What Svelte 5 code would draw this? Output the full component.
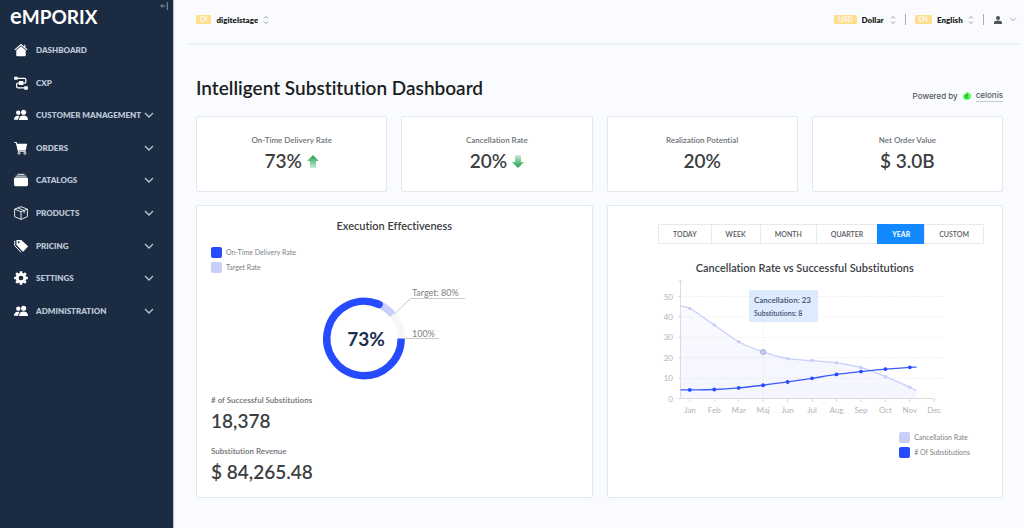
<script>
  const navItems = [
    { label: 'Dashboard', icon: 'home' },
    { label: 'CXP', icon: 'flow' },
    { label: 'Customer Management', icon: 'users', group: true },
    { label: 'Orders', icon: 'cart', group: true },
    { label: 'Catalogs', icon: 'stack', group: true },
    { label: 'Products', icon: 'box', group: true },
    { label: 'Pricing', icon: 'tag', group: true },
    { label: 'Settings', icon: 'gear', group: true },
    { label: 'Administration', icon: 'users', group: true },
  ]

  const kpis = [
    { label: 'On-Time Delivery Rate', value: '73%', trend: 'up' },
    { label: 'Cancellation Rate', value: '20%', trend: 'down' },
    { label: 'Realization Potential', value: '20%' },
    { label: 'Net Order Value', value: '$ 3.0B' },
  ]

  const totals = [
    { label: '# of Successful Substitutions', value: '18,378' },
    { label: 'Substitution Revenue', value: '$ 84,265.48' },
  ]

  const ranges = ['Today', 'Week', 'Month', 'Quarter', 'Year', 'Custom']
  let range = $state('Year')

  const months = ['Jan', 'Feb', 'Mar', 'Maj', 'Jun', 'Jul', 'Aug', 'Sep', 'Oct', 'Nov', 'Dec']
  const ticks = [0, 10, 20, 30, 40, 50]
  const cancellations = [44.1, 36, 27.8, 22.8, 19.5, 18.6, 17.5, 15.2, 10.7, 5.5]
  const substitutions = [4.2, 4.4, 5.2, 6.5, 8.1, 9.9, 11.8, 13.2, 14.4, 15.3]

  const x = (i) => 29.8 + i * 24.45
  const y = (v) => 123.5 - v * 2.04

  // smooth line through the points, running a little past both ends
  function curve(values, first, last) {
    const pts = [
      [20.5, y(first)],
      ...values.map((v, i) => [x(i), y(v)]),
      [256.5, y(last)],
    ]
    let d = `M${pts[0]}`
    for (let i = 0; i < pts.length - 1; i++) {
      const p0 = pts[Math.max(i - 1, 0)]
      const p1 = pts[i]
      const p2 = pts[i + 1]
      const p3 = pts[Math.min(i + 2, pts.length - 1)]
      const w = (p2[0] - p1[0]) / 3
      const m1 = (p2[1] - p0[1]) / (p2[0] - p0[0])
      const m2 = (p3[1] - p1[1]) / (p3[0] - p1[0])
      d += `C${p1[0] + w},${p1[1] + m1 * w} ${p2[0] - w},${p2[1] - m2 * w} ${p2}`
    }
    return d
  }

  const cancelPath = curve(cancellations, 45.3, 3.8)
  const subsPath = curve(substitutions, 4.2, 15.4)

  // clockwise from three o'clock, in degrees
  function arc(from, to) {
    const p = (a) => {
      const r = (a * Math.PI) / 180
      return `${45 + 37.2 * Math.cos(r)},${53.5 + 37.2 * Math.sin(r)}`
    }
    return `M${p(from)}A37.2,37.2 0 ${to - from > 180 ? 1 : 0} 1 ${p(to)}`
  }
</script>

{#snippet icon(name)}
  <svg class="icon" viewBox="0 0 16 16" aria-hidden="true">
    {#if name === 'home'}
      <path d="M2.6 8.2 8 3.6l5.4 4.6V14a1 1 0 0 1-1 1H3.6a1 1 0 0 1-1-1z" fill="#fff" />
      <path d="M.9 7.8 8 1.7l7.1 6.1M12.4 2v3" fill="none" stroke="#fff" stroke-width="1.3" />
    {:else if name === 'flow'}
      <path d="M3 2.6h9a1.6 1.6 0 0 1 1.6 1.6v2.3a1.6 1.6 0 0 1-1.6 1.6H4.6A1.6 1.6 0 0 0 3 9.7V12a1.6 1.6 0 0 0 1.6 1.6H14" fill="none" stroke="#fff" stroke-width="1.4" />
      <path d="M.2.8h4v3.6h-4zM5.6 5.8h5v4.6h-5zM11.8 11.8h4v3.8h-4z" fill="#fff" />
    {:else if name === 'users'}
      <circle cx="4.9" cy="5.3" r="2.5" fill="#fff" />
      <circle cx="11" cy="4.8" r="2.9" fill="#fff" />
      <path d="M0 13.4c0-3 1.8-4.6 4.6-4.6.7 0 1.3.1 1.8.4-1 .9-1.5 2.3-1.5 4.2zM5.8 13.6c0-3.3 2-5 5.1-5s5.1 1.7 5.1 5z" fill="#fff" />
    {:else if name === 'cart'}
      <path d="M.4 1.6h2.2L5 11.8h8.6" fill="none" stroke="#fff" stroke-width="1.2" />
      <path d="M2.8 3H15l-1.6 7.8H4.8z" fill="#fff" />
      <circle cx="5.8" cy="14" r="1.2" fill="none" stroke="#fff" />
      <circle cx="12.4" cy="14" r="1.2" fill="none" stroke="#fff" />
    {:else if name === 'stack'}
      <rect y="5.2" width="16" height="9.8" rx="1.6" fill="#fff" />
      <path d="M1.8 3.6h12.4M4 1.5h8" stroke="#fff" stroke-width="1.1" />
    {:else if name === 'box'}
      <path d="M8 .8 15.3 3.6v8.6L8 15.3.7 12.2V3.6zM.7 3.6 8 6.6l7.3-3M8 6.6v8.7M4.3 2.2l7.3 3v3" fill="none" stroke="#fff" stroke-linejoin="round" />
    {:else if name === 'tag'}
      <path d="M2.8 1.2h5.4l7.3 6.6a1 1 0 0 1 0 1.4L11 14a1 1 0 0 1-1.4 0L2.8 6.8z" fill="#fff" />
      <circle cx="5.4" cy="3.8" r="1.1" fill="#1b2b41" />
      <path d="M.8 2v5.6l7.3 7.7" fill="none" stroke="#fff" stroke-width="1.1" />
    {:else if name === 'gear'}
      <circle cx="8" cy="8" r="4.4" fill="none" stroke="#fff" stroke-width="3.4" />
      <path d="M8 .2v3M8 12.8v3M.2 8h3M12.8 8h3M2.5 2.5l2 2M11.5 11.5l2 2M2.5 13.5l2-2M11.5 4.5l2-2" stroke="#fff" stroke-width="3" />
    {/if}
  </svg>
{/snippet}

{#snippet chevron()}
  <svg class="chevron" viewBox="0 0 10 6" aria-hidden="true">
    <path d="M1 1l4 4 4-4" fill="none" stroke="currentColor" stroke-width="1.3" />
  </svg>
{/snippet}

{#snippet picker(code, label, value)}
  <label class="picker">
    <span class="code">{code}</span>
    <select aria-label={label}>
      <option>{value}</option>
    </select>
    <svg class="updown" viewBox="0 0 6 10" aria-hidden="true">
      <path d="M1 3.5 3 1.5l2 2M1 6.5l2 2 2-2" fill="none" stroke="#9a9da3" />
    </svg>
  </label>
{/snippet}

<div class="app">
  <aside class="sidebar">
    <div class="brand">
      <a class="logo" href="#home"><span class="logo-e">e</span>MPORIX</a>
      <button class="collapse" aria-label="Collapse menu">
        <svg viewBox="0 0 8 8" aria-hidden="true">
          <path d="M5.5 4H.8M2.6 2.2.8 4l1.8 1.8M7.3 0v8" fill="none" stroke="#a3adba" stroke-width=".8" />
        </svg>
      </button>
    </div>
    <nav>
      {#each navItems as item}
        {#if item.group}
          <button class="nav-item">
            {@render icon(item.icon)}
            <span>{item.label}</span>
            {@render chevron()}
          </button>
        {:else}
          <a class="nav-item" href="#{item.icon}">
            {@render icon(item.icon)}
            <span>{item.label}</span>
          </a>
        {/if}
      {/each}
    </nav>
  </aside>

  <main>
    <header class="topbar">
      {@render picker('DI', 'Tenant', 'digitelstage')}
      <div class="tools">
        {@render picker('USD', 'Currency', 'Dollar')}
        <span class="divider"></span>
        {@render picker('EN', 'Language', 'English')}
        <span class="divider"></span>
        <button class="account" aria-label="Account">
          <svg class="person" viewBox="0 0 8 8" aria-hidden="true">
            <circle cx="4" cy="2" r="2" fill="#4e5358" />
            <path d="M0 8V6.8C0 5.4 1.5 4.6 4 4.6s4 .8 4 2.2V8z" fill="#4e5358" />
          </svg>
          <svg class="caret" viewBox="0 0 8 5" aria-hidden="true">
            <path d="M1 .8l3 3 3-3" fill="none" stroke="#9a9da3" stroke-width=".8" />
          </svg>
        </button>
      </div>
    </header>

    <div class="content">
      <div class="heading">
        <h1>Intelligent Substitution Dashboard</h1>
        <p class="powered">
          Powered by
          <svg viewBox="0 0 8 8" aria-hidden="true">
            <path d="M4.3 0c.8-.1 1 .9 1.8 1.2C7.6 1.7 8.2 3 7.8 4.5 7.6 6 7 7.4 5.6 7.6 4 8.2 2.2 8 1.3 7.1.3 6.5 0 5.5.1 4.3c0-1.4.9-1.9 1.9-2.3C3 1.5 3.3.2 4.3 0z" fill="#4dfb4b" />
            <path d="M5 3.2a1.4 1.4 0 1 0 0 1.9" fill="none" stroke="#17611f" stroke-width=".8" />
          </svg>
          <a href="#celonis">celonis</a>
        </p>
      </div>

      <section class="kpis">
        {#each kpis as kpi}
          <article class="card kpi">
            <h2 class="label">{kpi.label}</h2>
            <p class="value">
              {kpi.value}
              {#if kpi.trend}
                <svg class="trend {kpi.trend}" viewBox="0 0 12 13" role="img" aria-label={kpi.trend}>
                  <defs>
                    <linearGradient id="trend-{kpi.trend}" x1="0" y1="0" x2="0" y2="1">
                      <stop offset="0.2" stop-color="#3cae63" />
                      <stop offset="1" stop-color="#3cae63" stop-opacity="0.25" />
                    </linearGradient>
                  </defs>
                  <path d="M6 0l6 6H9v7H3V6H0z" fill="url(#trend-{kpi.trend})" />
                </svg>
              {/if}
            </p>
          </article>
        {/each}
      </section>

      <section class="panels">
        <article class="card panel">
          <h2 class="title">Execution Effectiveness</h2>
          <ul class="legend">
            <li><span class="swatch strong"></span>On-Time Delivery Rate</li>
            <li><span class="swatch soft"></span>Target Rate</li>
          </ul>

          <svg class="donut" viewBox="0 0 150 97" role="img" aria-label="On-time delivery 73%, target 80%">
            <g fill="none" stroke-width="7.4">
              <path d={arc(318, 360)} stroke="#f7f7f8" />
              <path d={arc(290, 320)} stroke="#c9cffb" />
              <path d={arc(0, 292)} stroke="#264bff" />
              <path d={arc(290, 294)} stroke="#264bff" stroke-linecap="round" />
            </g>
            <path d="M75 29.5 91.5 13.5H146M85.5 53.5H120" fill="none" stroke="#cbcbcb" />
            <text class="donut-note" x="93" y="11">Target: 80%</text>
            <text class="donut-note" x="93" y="52">100%</text>
            <text class="donut-value" x="47" y="61">73%</text>
          </svg>

          <dl class="totals">
            {#each totals as total}
              <div>
                <dt class="label">{total.label}</dt>
                <dd class="value">{total.value}</dd>
              </div>
            {/each}
          </dl>
        </article>

        <article class="card panel">
          <div class="ranges">
            {#each ranges as r}
              <button class:active={range === r} aria-pressed={range === r} onclick={() => (range = r)}>{r}</button>
            {/each}
          </div>
          <h2 class="title chart-title">Cancellation Rate vs Successful Substitutions</h2>

          <svg class="chart" viewBox="0 0 290 145" role="img" aria-label="Cancellations and substitutions by month">
            <defs>
              <linearGradient id="area" x1="0" y1="0" x2="0" y2="1">
                <stop offset="0" stop-color="#c9cffb" stop-opacity="0.1" />
                <stop offset="1" stop-color="#c9cffb" stop-opacity="0.2" />
              </linearGradient>
            </defs>

            {#each ticks as t}
              {#if t > 0}
                <path d="M21 {y(t)}H285" stroke="#f2f2f2" stroke-dasharray="2 1" />
              {/if}
              <path d="M18 {y(t)}h3" stroke="#d9d9d9" />
              <text class="axis" x="13" y={y(t) + 3} text-anchor="end">{t}</text>
            {/each}
            {#each months as m, i}
              <path d="M{x(i)} 124v3" stroke="#d9d9d9" />
              <text class="axis" x={x(i)} y="138" text-anchor="middle">{m}</text>
            {/each}
            <path d="M{x(3)} 47v76" stroke="#f2f2f2" stroke-dasharray="2 1" />

            <path d="{cancelPath}V123.5H20.5z" fill="url(#area)" />
            <path d="M20.5 5.5v118H{x(10)}M18.5 7l2-2 2 2" fill="none" stroke="#dcdcdc" />

            <path d={cancelPath} fill="none" stroke="#c9cffb" stroke-width="1.3" />
            <path d={subsPath} fill="none" stroke="#3b5bff" stroke-width="1.3" />
            {#each cancellations as v, i}
              {#if i === 3}
                <circle cx={x(i)} cy={y(v)} r="2.5" fill="#c9cffb" stroke="#a0a5d8" />
              {:else}
                <circle cx={x(i)} cy={y(v)} r="1.8" fill="#c9cffb" />
              {/if}
            {/each}
            {#each substitutions as v, i}
              <circle cx={x(i)} cy={y(v)} r="1.9" fill="#264bff" />
            {/each}

            <rect x="89" y="15" width="69" height="32" rx="1" fill="#deebff" />
            <text class="tip" x="94" y="28">Cancellation: 23</text>
            <text class="tip small" x="94" y="41">Substitutions: 8</text>
          </svg>

          <ul class="legend chart-legend">
            <li><span class="swatch soft"></span>Cancellation Rate</li>
            <li><span class="swatch strong"></span># Of Substitutions</li>
          </ul>
        </article>
      </section>
    </div>
  </main>
</div>

<style>
  :global(body) {
    margin: 0;
    background: #fafbfe;
  }

  .app {
    display: flex;
    min-height: 100vh;
    font-family: Lato, 'Liberation Sans', sans-serif;
    font-variant-ligatures: none;
    color: #3c4043;
  }

  h1, h2, p, ul, dl, dd {
    margin: 0;
    padding: 0;
  }

  button, select {
    font: inherit;
    color: inherit;
    background: none;
    border: 0;
    padding: 0;
    cursor: pointer;
  }

  /* Sidebar */
  .sidebar {
    width: 173px;
    flex-shrink: 0;
    background: #1b2b41;
    box-shadow: 1px 0 1px #c3c8cf;
  }

  .brand {
    display: flex;
    justify-content: space-between;
    align-items: flex-start;
    height: 34px;
    padding: 0 5px 0 10px;
  }

  .logo {
    color: #fff;
    font-size: 19px;
    font-weight: 700;
    line-height: 24px;
    padding-top: 4px;
    text-decoration: none;
  }

  .logo-e {
    font-size: 22px;
  }

  .collapse {
    display: flex;
    padding-top: 2px;
  }

  .collapse svg {
    width: 8px;
    height: 8px;
  }

  nav {
    display: grid;
    grid-template-columns: minmax(0, 1fr);
    grid-auto-rows: 1fr;
    min-height: 293px;
  }

  .nav-item {
    display: flex;
    align-items: center;
    gap: 8px;
    padding: 0 19px 0 14px;
    color: #b9c5d5;
    font-size: 8px;
    font-weight: 800;
    text-transform: uppercase;
    text-decoration: none;
    text-align: left;
    white-space: nowrap;
  }

  .nav-item span {
    flex: 1;
    min-width: 0;
  }

  .icon {
    width: 14px;
    height: 14px;
    flex-shrink: 0;
  }

  .chevron {
    width: 10px;
    height: 6px;
    margin-left: -8px;
    flex-shrink: 0;
  }

  /* Top bar */
  main {
    flex: 1;
    min-width: 0;
  }

  .topbar {
    display: flex;
    justify-content: space-between;
    align-items: center;
    height: 39px;
    margin: 0 3px 0 14px;
    padding: 0 4px 4px 9px;
    border-bottom: 2px solid #eef1f8;
  }

  .tools, .picker, .account {
    display: flex;
    align-items: center;
  }

  .tools {
    gap: 9px;
  }

  .picker {
    gap: 5px;
  }

  .code {
    padding: 0 4px;
    border-radius: 1px;
    background: #ffdf8e;
    color: #fffaf0;
    font-size: 7px;
    font-weight: 700;
    line-height: 9px;
  }

  select {
    appearance: none;
    color: #1d1f21;
    font-size: 8px;
    font-weight: 800;
    line-height: 12px;
  }

  .updown {
    width: 6px;
    height: 10px;
  }

  .divider {
    width: 1px;
    height: 11px;
    background: #a9abb0;
  }

  .account {
    gap: 7px;
    padding-left: 1px;
  }

  .person {
    width: 8px;
    height: 8px;
  }

  .caret {
    width: 8px;
    height: 5px;
  }

  /* Content */
  .content {
    padding: 29px 21px 30px 23px;
  }

  .heading {
    display: flex;
    justify-content: space-between;
    align-items: flex-end;
    margin-bottom: 14px;
  }

  h1 {
    color: #1b1d1f;
    font-size: 19px;
    font-weight: 600;
    line-height: 28px;
  }

  .powered {
    display: flex;
    align-items: center;
    gap: 5px;
    color: #55585c;
    font-family: Inter, 'Liberation Sans', sans-serif;
    font-size: 8px;
    font-weight: 500;
    line-height: 11px;
  }

  .powered svg {
    width: 8px;
    height: 8px;
  }

  .powered a {
    color: inherit;
    text-decoration: none;
    border-bottom: 1px solid #c9cacd;
  }

  .card {
    background: #fff;
    border: 1px solid #e1e8f0;
    border-radius: 2px;
  }

  .kpis {
    display: grid;
    grid-template-columns: repeat(4, 1fr);
    gap: 14px;
    margin-bottom: 13px;
  }

  .kpi {
    padding: 17px 8px 16px;
    text-align: center;
  }

  .label {
    color: #6b7075;
    font-size: 8px;
    font-weight: 600;
    line-height: 13px;
  }

  .value {
    display: flex;
    align-items: center;
    color: #3c4043;
    font-size: 19px;
    font-weight: 600;
    line-height: 28px;
  }

  .kpi .value {
    justify-content: center;
    gap: 5px;
  }

  .trend {
    width: 12px;
    height: 13px;
  }

  .trend.down {
    transform: rotate(180deg);
  }

  .panels {
    display: grid;
    grid-template-columns: repeat(2, 1fr);
    gap: 14px;
  }

  .panel {
    padding: 12px 14px 11px;
  }

  .title {
    font-size: 11px;
    font-weight: 600;
    line-height: 15px;
    text-align: center;
  }

  .legend {
    display: grid;
    gap: 4px;
    margin-top: 14px;
    list-style: none;
    color: #7d8186;
    font-size: 7px;
    line-height: 11px;
  }

  .legend li {
    display: flex;
    align-items: center;
    gap: 4px;
  }

  .swatch {
    width: 11px;
    height: 11px;
    border-radius: 2px;
  }

  .strong {
    background: #264bff;
  }

  .soft {
    background: #c9cffb;
  }

  .donut {
    display: block;
    width: 100%;
    max-width: 150px;
    margin: 12px auto;
  }

  .donut-note {
    fill: #7d8186;
    font-size: 9px;
  }

  .donut-value {
    fill: #1b2f52;
    font-size: 19px;
    font-weight: 700;
    text-anchor: middle;
  }

  .totals {
    display: grid;
    gap: 10px;
  }

  .ranges {
    display: flex;
    width: fit-content;
    margin: 6px 4px 0 auto;
    border: 1px solid #e6eaee;
    border-radius: 1px;
  }

  .ranges button {
    padding: 0 14px;
    border-left: 1px solid #e6eaee;
    color: #55595e;
    font-size: 7px;
    font-weight: 600;
    line-height: 18px;
    text-transform: uppercase;
  }

  .ranges button:first-child {
    border-left: 0;
  }

  .ranges .active {
    margin: -1px 0;
    border-color: #1389ff;
    background: #1389ff;
    color: #fff;
    font-weight: 700;
  }

  .chart-title {
    margin-top: 16px;
  }

  .chart {
    display: block;
    width: 100%;
    max-width: 290px;
    margin: 0 auto;
  }

  .axis {
    fill: #b3b3b3;
    font-size: 8px;
  }

  .tip {
    fill: #3d4f70;
    font-size: 8px;
    font-weight: 600;
  }

  .tip.small {
    font-size: 7px;
  }

  .chart-legend {
    width: fit-content;
    margin: 12px 18px 0 auto;
  }
</style>
